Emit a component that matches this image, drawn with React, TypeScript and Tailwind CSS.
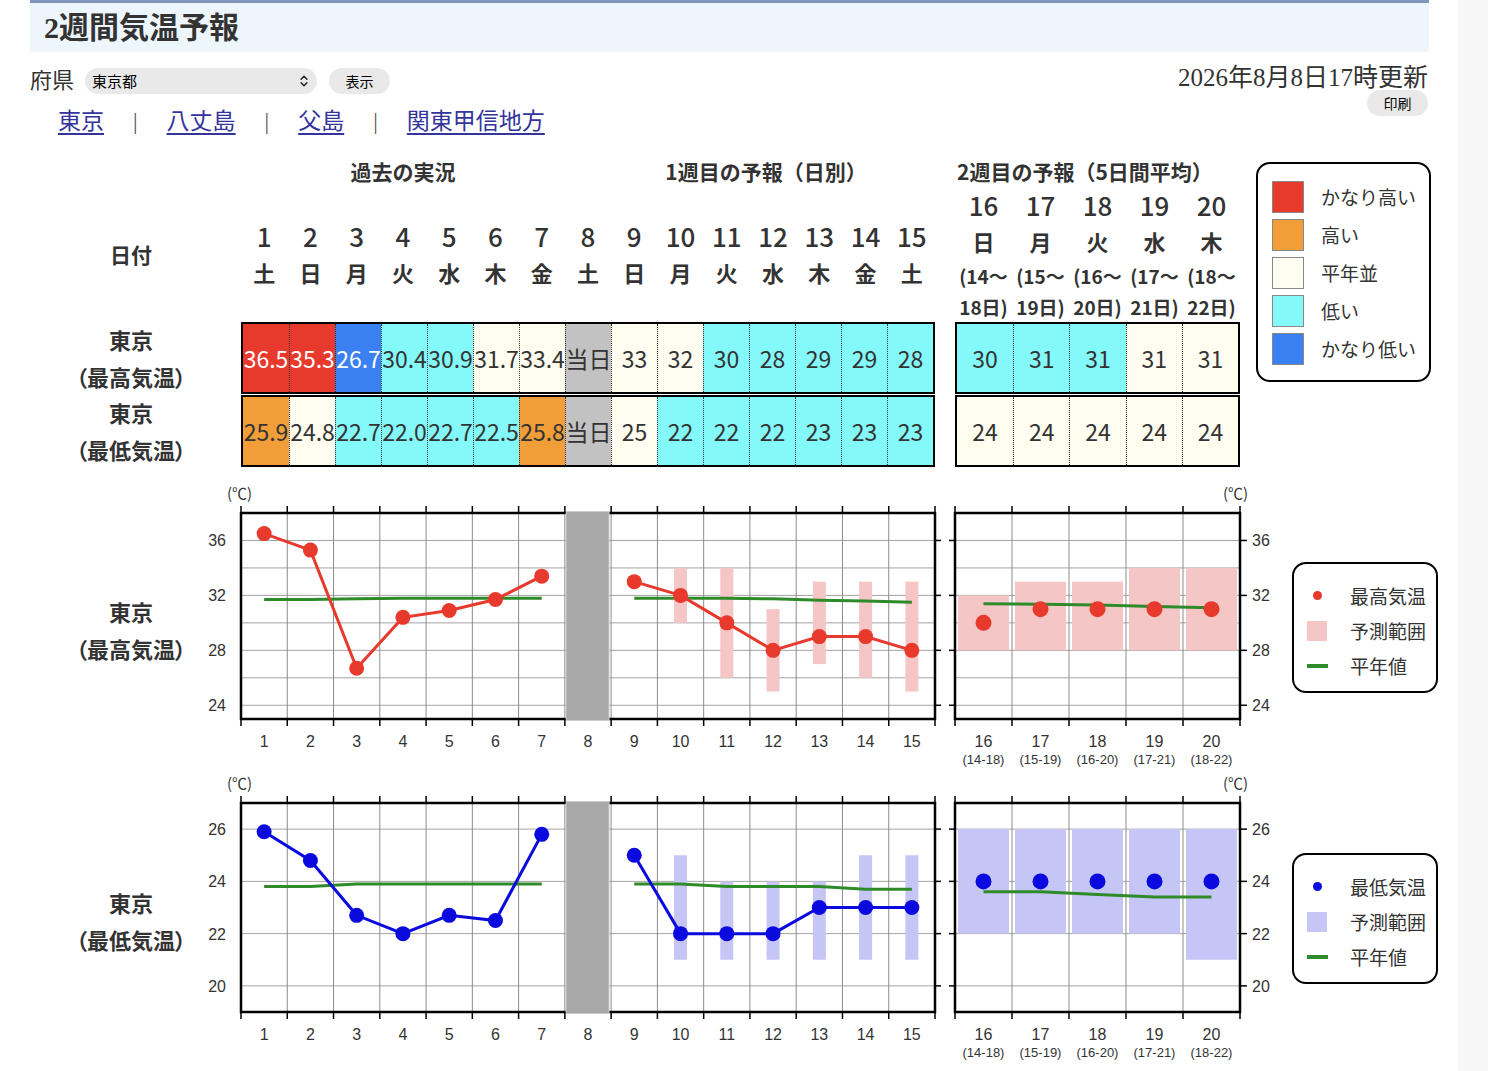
import { ChevronsUpDown } from "lucide-react";

const JP = "font-['Noto_Sans_CJK_JP','Noto_Sans',sans-serif]";
const SERIF = "font-['Liberation_Serif','Noto_Sans_CJK_JP',serif]";
const SANS = "Liberation Sans, Arial, sans-serif";
const CJK = "Noto Sans CJK JP, sans-serif";

type Tone = "R" | "O" | "W" | "C" | "B" | "G";
type Cell = [string, Tone];
type Range = [number, number];

const tone: Record<Tone, string> = {
	R: "bg-[#e8392d] text-white",
	O: "bg-[#f19e38]",
	W: "bg-[#fffdf0]",
	C: "bg-[#84f9f9]",
	B: "bg-[#3b80f2] text-white",
	G: "bg-[#c2c2c2]",
};

const days = [1, 2, 3, 4, 5, 6, 7, 8, 9, 10, 11, 12, 13, 14, 15];
const weekdays = ["土", "日", "月", "火", "水", "木", "金", "土", "日", "月", "火", "水", "木", "金", "土"];

const maxRow: Cell[] = [
	["36.5", "R"], ["35.3", "R"], ["26.7", "B"], ["30.4", "C"], ["30.9", "C"],
	["31.7", "W"], ["33.4", "W"], ["当日", "G"], ["33", "W"], ["32", "W"],
	["30", "C"], ["28", "C"], ["29", "C"], ["29", "C"], ["28", "C"],
];
const minRow: Cell[] = [
	["25.9", "O"], ["24.8", "W"], ["22.7", "C"], ["22.0", "C"], ["22.7", "C"],
	["22.5", "C"], ["25.8", "O"], ["当日", "G"], ["25", "W"], ["22", "C"],
	["22", "C"], ["22", "C"], ["23", "C"], ["23", "C"], ["23", "C"],
];
const week2Max: Cell[] = [["30", "C"], ["31", "C"], ["31", "C"], ["31", "W"], ["31", "W"]];
const week2Min: Cell[] = [["24", "W"], ["24", "W"], ["24", "W"], ["24", "W"], ["24", "W"]];

const week2 = [
	{ d: "16", w: "日", a: "(14〜", b: "18日)", r: "(14-18)" },
	{ d: "17", w: "月", a: "(15〜", b: "19日)", r: "(15-19)" },
	{ d: "18", w: "火", a: "(16〜", b: "20日)", r: "(16-20)" },
	{ d: "19", w: "水", a: "(17〜", b: "21日)", r: "(17-21)" },
	{ d: "20", w: "木", a: "(18〜", b: "22日)", r: "(18-22)" },
];

const legend = [
	{ c: "bg-[#e8392d]", t: "かなり高い" },
	{ c: "bg-[#f19e38]", t: "高い" },
	{ c: "bg-[#fffdf0]", t: "平年並" },
	{ c: "bg-[#84f9f9]", t: "低い" },
	{ c: "bg-[#3b80f2]", t: "かなり低い" },
];

const DataRow = ({ cells, cols }: { cells: Cell[]; cols: string }) => (
	<div className={`grid ${cols} h-[72px] border-2 border-black text-[23px]`}>
		{cells.map(([v, t], i) => (
			<div
				key={i}
				className={`${tone[t]} flex items-center justify-center whitespace-nowrap ${
					i ? "border-l border-dotted border-[#333]" : ""
				}`}
			>
				{v}
			</div>
		))}
	</div>
);

const RowLabel = ({ sub }: { sub: string }) => (
	<div className="flex flex-col items-center text-[22px] font-bold leading-[37px] [font-feature-settings:'palt']">
		<span>東京</span>
		<span>{sub}</span>
	</div>
);

const L0 = 241;
const L1 = 935;
const CW = (L1 - L0) / 15;
const R0 = 955;
const RW = 57;
const R1 = R0 + RW * 5;

type ChartProps = {
	vy: number;
	vh: number;
	top: number;
	bottom: number;
	tMax: number;
	tMin: number;
	grid: number[];
	labels: number[];
	color: string;
	band: string;
	obs: number[];
	fc: number[];
	fcRange: Range[];
	normObs: number[];
	normFc: number[];
	wk2: number[];
	wk2Range: Range[];
	wk2Norm: number[];
};

const Chart = (p: ChartProps) => {
	const h = p.bottom - p.top;
	const y = (t: number) => p.top + ((p.tMax - t) * h) / (p.tMax - p.tMin);
	const lx = (d: number) => L0 + (d - 0.5) * CW;
	const rx = (i: number) => R0 + (i + 0.5) * RW;
	const pts = (xs: number[], ts: number[]) =>
		xs.map((x, i) => `${x},${y(ts[i])}`).join(" ");
	const obsX = p.obs.map((_, i) => lx(i + 1));
	const fcX = p.fc.map((_, i) => lx(i + 9));
	const wkX = p.wk2.map((_, i) => rx(i));
	const green = "#2f8a2a";

	return (
		<svg
			width={1080}
			height={p.vh}
			viewBox={`200 ${p.vy} 1080 ${p.vh}`}
			className="shrink-0"
		>
			<rect x={L0} y={p.top} width={L1 - L0} height={h} fill="#fff" />
			<rect x={R0} y={p.top} width={R1 - R0} height={h} fill="#fff" />

			{p.grid.map((t) => (
				<g key={t} stroke="#a3a3a3" strokeWidth={1}>
					<line x1={L0} x2={L1} y1={y(t)} y2={y(t)} />
					<line x1={R0} x2={R1} y1={y(t)} y2={y(t)} />
				</g>
			))}
			{days.slice(1).map((k) => (
				<line
					key={k}
					x1={L0 + (k - 1) * CW}
					x2={L0 + (k - 1) * CW}
					y1={p.top}
					y2={p.bottom}
					stroke="#8c8c8c"
					strokeWidth={1}
				/>
			))}
			{[1, 2, 3, 4].map((k) => (
				<line
					key={k}
					x1={R0 + k * RW}
					x2={R0 + k * RW}
					y1={p.top}
					y2={p.bottom}
					stroke="#8c8c8c"
					strokeWidth={1}
				/>
			))}

			{p.fcRange.map((r, i) => (
				<rect
					key={i}
					x={lx(i + 10) - 6.5}
					y={y(r[1])}
					width={13}
					height={y(r[0]) - y(r[1])}
					fill={p.band}
				/>
			))}
			{p.wk2Range.map((r, i) => (
				<rect
					key={i}
					x={R0 + i * RW + 3}
					y={y(r[1])}
					width={51}
					height={y(r[0]) - y(r[1])}
					fill={p.band}
				/>
			))}

			<rect x={L0} y={p.top} width={L1 - L0} height={h} fill="none" stroke="#000" strokeWidth={2.5} />
			<rect x={R0} y={p.top} width={R1 - R0} height={h} fill="none" stroke="#000" strokeWidth={2.5} />
			<rect x={566} y={p.top - 1.5} width={43} height={h + 3} fill="#a8a8a8" stroke="#cdcdcd" strokeWidth={1} />

			<g stroke="#000" strokeWidth={1.5}>
				{[0, ...days].map((k) => (
					<g key={k}>
						<line x1={L0 + k * CW} x2={L0 + k * CW} y1={p.top - 7} y2={p.top} />
						<line x1={L0 + k * CW} x2={L0 + k * CW} y1={p.bottom} y2={p.bottom + 7} />
					</g>
				))}
				{[0, 1, 2, 3, 4, 5].map((k) => (
					<g key={k}>
						<line x1={R0 + k * RW} x2={R0 + k * RW} y1={p.top - 7} y2={p.top} />
						<line x1={R0 + k * RW} x2={R0 + k * RW} y1={p.bottom} y2={p.bottom + 7} />
					</g>
				))}
				{p.labels.map((t) => (
					<g key={t}>
						<line x1={L1} x2={L1 + 6} y1={y(t)} y2={y(t)} />
						<line x1={R0 - 6} x2={R0} y1={y(t)} y2={y(t)} />
						<line x1={R1} x2={R1 + 7} y1={y(t)} y2={y(t)} />
					</g>
				))}
			</g>

			<polyline points={pts(obsX, p.normObs)} fill="none" stroke={green} strokeWidth={3} />
			<polyline points={pts(fcX, p.normFc)} fill="none" stroke={green} strokeWidth={3} />
			<polyline points={pts(wkX, p.wk2Norm)} fill="none" stroke={green} strokeWidth={3} />

			<polyline points={pts(obsX, p.obs)} fill="none" stroke={p.color} strokeWidth={3} />
			<polyline points={pts(fcX, p.fc)} fill="none" stroke={p.color} strokeWidth={3} />
			{p.obs.map((t, i) => (
				<circle key={`o${i}`} cx={obsX[i]} cy={y(t)} r={7.5} fill={p.color} />
			))}
			{p.fc.map((t, i) => (
				<circle key={`f${i}`} cx={fcX[i]} cy={y(t)} r={7.5} fill={p.color} />
			))}
			{p.wk2.map((t, i) => (
				<circle key={`w${i}`} cx={wkX[i]} cy={y(t)} r={8} fill={p.color} />
			))}

			<g fontFamily={SANS} fontSize={16} fill="#333">
				{p.labels.map((t) => (
					<g key={t}>
						<text x={226} y={y(t) + 6} textAnchor="end">
							{t}
						</text>
						<text x={1252} y={y(t) + 6}>
							{t}
						</text>
					</g>
				))}
				{days.map((d) => (
					<text key={d} x={lx(d)} y={p.bottom + 28} textAnchor="middle">
						{d}
					</text>
				))}
				{week2.map((w, i) => (
					<g key={w.d}>
						<text x={rx(i)} y={p.bottom + 28} textAnchor="middle">
							{w.d}
						</text>
						<text x={rx(i)} y={p.bottom + 45} textAnchor="middle" fontSize={13}>
							{w.r}
						</text>
					</g>
				))}
			</g>
			<g fontFamily={CJK} fontSize={15} fill="#333">
				<text x={227} y={p.top - 14}>
					(℃)
				</text>
				<text x={1223} y={p.top - 14}>
					(℃)
				</text>
			</g>
		</svg>
	);
};

const ChartLegend = ({ dot, band, label }: { dot: string; band: string; label: string }) => (
	<div className="w-[146px] h-[131px] rounded-[14px] border-2 border-black pt-[14px] text-[19px] leading-none">
		{[
			{ icon: <span className={`w-[9px] h-[9px] rounded-full ${dot}`} />, t: label },
			{ icon: <span className={`w-[20px] h-[20px] ${band}`} />, t: "予測範囲" },
			{ icon: <span className="w-[21px] h-[4px] bg-[#2f8a2a]" />, t: "平年値" },
		].map((it) => (
			<div key={it.t} className="flex items-center h-[35px]">
				<div className="ml-[6px] w-[34px] flex justify-center">{it.icon}</div>
				<span className="ml-[16px]">{it.t}</span>
			</div>
		))}
	</div>
);

const App = () => {
	return (
		<div className={`flex min-h-screen bg-white text-[#333] ${JP}`}>
			<div className="w-[1458px] shrink-0 pl-[30px]">
				<div className="w-[1399px] h-[52px] border-t-[3px] border-[#8196bd] bg-[#eef6fd] pl-[14px] flex items-center">
					<h1 className={`${SERIF} text-[30px] font-bold leading-none`}>2週間気温予報</h1>
				</div>

				<div className="w-[1399px] mt-[16px] flex justify-between items-start">
					<div>
						<div className="flex items-center h-[26px]">
							<span className={`${SERIF} text-[22px] leading-none`}>府県</span>
							<div className="relative ml-[11px]">
								<select className="appearance-none w-[232px] h-[26px] rounded-full bg-[#e9e9e9] pl-[7px] text-[15px] text-black outline-none">
									<option>東京都</option>
								</select>
								<ChevronsUpDown
									size={14}
									strokeWidth={2.5}
									className="absolute right-[6px] top-[6px] text-[#222] pointer-events-none"
								/>
							</div>
							<button
								type="button"
								className="ml-[12px] h-[26px] w-[61px] rounded-full bg-[#e9e9e9] text-[14px] text-black"
							>
								表示
							</button>
						</div>
						<div className={`${SERIF} mt-[13px] ml-[28px] flex items-center h-[30px] text-[23px]`}>
							<a href="#tokyo" className="text-[#34349c] underline underline-offset-4">東京</a>
							<span className="mx-[29px] text-[#555]">|</span>
							<a href="#hachijo" className="text-[#34349c] underline underline-offset-4">八丈島</a>
							<span className="mx-[29px] text-[#555]">|</span>
							<a href="#chichi" className="text-[#34349c] underline underline-offset-4">父島</a>
							<span className="mx-[29px] text-[#555]">|</span>
							<a href="#kanto" className="text-[#34349c] underline underline-offset-4">関東甲信地方</a>
						</div>
					</div>
					<div className="flex flex-col items-end -mt-[5px] pr-[1px]">
						<div className={`${SERIF} text-[25px] leading-[30px]`}>2026年8月8日17時更新</div>
						<button
							type="button"
							className="-mt-[3px] h-[26px] w-[61px] rounded-full bg-[#e9e9e9] text-[14px] text-black"
						>
							印刷
						</button>
					</div>
				</div>

				<div className="mt-[21px] flex">
					<div className="ml-[32px] w-[138px] flex flex-col">
						<div className="h-[30px]" />
						<div className="h-[134px] flex items-center justify-center text-[21px] font-bold">日付</div>
						<div className="h-[72px] flex items-center justify-center">
							<RowLabel sub="（最高気温）" />
						</div>
						<div className="h-[1px]" />
						<div className="h-[72px] flex items-center justify-center">
							<RowLabel sub="（最低気温）" />
						</div>
					</div>

					<div className="ml-[41px] w-[694px]">
						<div className="h-[30px] flex text-[21px] font-bold leading-[26px]">
							<div className="w-[324px] text-center">過去の実況</div>
							<div className="w-[370px] text-center pl-[32px]">1週目の予報（日別）</div>
						</div>
						<div className="h-[134px] flex flex-col justify-center">
							<div className="grid grid-cols-15 h-[36px] pb-[3px] items-center text-center text-[26px] leading-[30px] font-medium">
								{days.map((d) => (
									<span key={d}>{d}</span>
								))}
							</div>
							<div className="grid grid-cols-15 h-[36px] pb-[2px] items-center text-center text-[22px] leading-[32px] font-bold">
								{weekdays.map((w, i) => (
									<span key={i}>{w}</span>
								))}
							</div>
						</div>
						<DataRow cells={maxRow} cols="grid-cols-15" />
						<div className="h-[1px]" />
						<DataRow cells={minRow} cols="grid-cols-15" />
					</div>

					<div className="ml-[20px] w-[285px]">
						<div className="h-[30px] pl-[2px] text-[21px] font-bold leading-[26px] whitespace-nowrap">
							2週目の予報（5日間平均）
						</div>
						<div className="h-[134px]">
							<div className="grid grid-cols-5 h-[36px] pb-[3px] items-center text-center text-[26px] leading-[30px] font-medium">
								{week2.map((w) => (
									<span key={w.d}>{w.d}</span>
								))}
							</div>
							<div className="grid grid-cols-5 h-[36px] pb-[2px] items-center text-center text-[22px] leading-[32px] font-bold">
								{week2.map((w) => (
									<span key={w.d}>{w.w}</span>
								))}
							</div>
							<div className="grid grid-cols-5 h-[31px] items-center text-center text-[19px] leading-[28px] font-bold whitespace-nowrap">
								{week2.map((w) => (
									<span key={w.d}>{w.a}</span>
								))}
							</div>
							<div className="grid grid-cols-5 h-[31px] items-center text-center text-[19px] leading-[28px] font-bold whitespace-nowrap">
								{week2.map((w) => (
									<span key={w.d}>{w.b}</span>
								))}
							</div>
						</div>
						<DataRow cells={week2Max} cols="grid-cols-5" />
						<div className="h-[1px]" />
						<DataRow cells={week2Min} cols="grid-cols-5" />
					</div>

					<div className="ml-[16px] mt-[4px] w-[175px] h-[220px] rounded-[14px] border-2 border-black pt-[14px] pl-[14px]">
						{legend.map((l) => (
							<div key={l.t} className="flex items-center h-[38px]">
								<span className={`w-[32px] h-[32px] border border-[#888] ${l.c}`} />
								<span className="ml-[17px] text-[19px] text-[#333]">{l.t}</span>
							</div>
						))}
					</div>
				</div>

				<div className="mt-[3px] flex h-[300px]">
					<div className="ml-[32px] w-[138px] pt-[123px] flex justify-center">
						<RowLabel sub="（最高気温）" />
					</div>
					<Chart
						vy={470}
						vh={300}
						top={513}
						bottom={719}
						tMax={38}
						tMin={23}
						grid={[24, 26, 28, 30, 32, 34, 36]}
						labels={[24, 28, 32, 36]}
						color="#e8392d"
						band="#f5c6c6"
						obs={[36.5, 35.3, 26.7, 30.4, 30.9, 31.7, 33.4]}
						fc={[33, 32, 30, 28, 29, 29, 28]}
						fcRange={[[30, 34], [26, 34], [25, 31], [27, 33], [26, 33], [25, 33]]}
						normObs={[31.7, 31.7, 31.75, 31.8, 31.8, 31.8, 31.8]}
						normFc={[31.8, 31.8, 31.8, 31.75, 31.65, 31.6, 31.5]}
						wk2={[30, 31, 31, 31, 31]}
						wk2Range={[[28, 32], [28, 33], [28, 33], [28, 34], [28, 34]]}
						wk2Norm={[31.4, 31.35, 31.3, 31.2, 31.1]}
					/>
					<div className="ml-[12px] mt-[92px]">
						<ChartLegend dot="bg-[#e8392d]" band="bg-[#f5c6c6]" label="最高気温" />
					</div>
				</div>

				<div className="flex h-[301px]">
					<div className="ml-[32px] w-[138px] pt-[114px] flex justify-center">
						<RowLabel sub="（最低気温）" />
					</div>
					<Chart
						vy={770}
						vh={301}
						top={803}
						bottom={1012}
						tMax={27}
						tMin={19}
						grid={[20, 22, 24, 26]}
						labels={[20, 22, 24, 26]}
						color="#0a0adf"
						band="#c6c6f6"
						obs={[25.9, 24.8, 22.7, 22.0, 22.7, 22.5, 25.8]}
						fc={[25, 22, 22, 22, 23, 23, 23]}
						fcRange={[[21, 25], [21, 24], [21, 24], [21, 24], [21, 25], [21, 25]]}
						normObs={[23.8, 23.8, 23.9, 23.9, 23.9, 23.9, 23.9]}
						normFc={[23.9, 23.9, 23.8, 23.8, 23.8, 23.7, 23.7]}
						wk2={[24, 24, 24, 24, 24]}
						wk2Range={[[22, 26], [22, 26], [22, 26], [22, 26], [21, 26]]}
						wk2Norm={[23.6, 23.6, 23.5, 23.4, 23.4]}
					/>
					<div className="ml-[12px] mt-[83px]">
						<ChartLegend dot="bg-[#0a0adf]" band="bg-[#c6c6f6]" label="最低気温" />
					</div>
				</div>
			</div>
			<div className="flex-1 bg-[#f7f7f7]" />
		</div>
	);
};

export default App;
